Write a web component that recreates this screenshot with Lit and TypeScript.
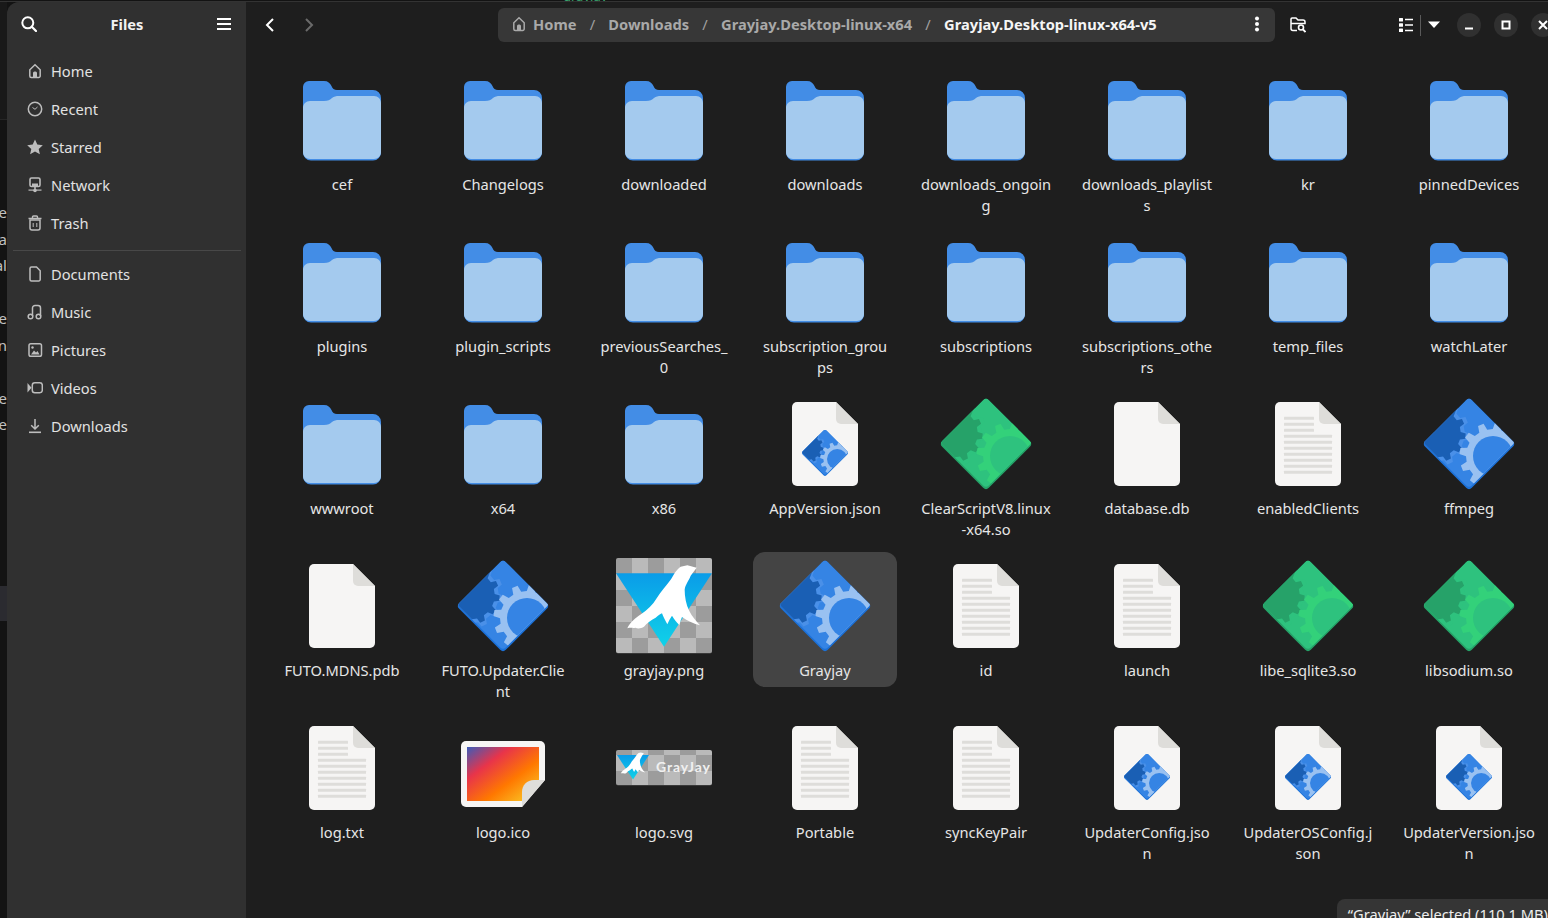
import { LitElement, html, svg, css } from "lit";
import { customElement } from "lit/decorators.js";

let uid = 0;

function gear(cx: number, cy: number, root: number, tip: number, n: number, phase: number): string {
  const pts: string[] = [];
  const step = (Math.PI * 2) / n;
  for (let i = 0; i < n; i++) {
    const a = phase + i * step;
    const offs: [number, number][] = [
      [-0.3, root],
      [-0.17, tip],
      [0.17, tip],
      [0.3, root],
    ];
    for (const [o, r] of offs) {
      const t = a + o * step;
      pts.push(`${(cx + Math.cos(t) * r).toFixed(2)},${(cy + Math.sin(t) * r).toFixed(2)}`);
    }
  }
  return pts.join(" ");
}

const BLUE = { edge: "#1c71d8", main: "#3584e4", lightGear: "#4a90e8", dark: "#1a5fb4", ring: "#99c1f1", hole: "#3584e4" };
const GREEN = { edge: "#26a269", main: "#2ec27e", lightGear: "#2ec27e", dark: "#26a269", ring: "#33d17a", hole: "#2ec27e" };

function diamond(c: typeof BLUE) {
  const id = `d${uid++}`;
  return svg`
    <defs>
      <clipPath id=${id}><rect x="15" y="15" width="66" height="66" rx="4" transform="rotate(45 48 48)"></rect></clipPath>
      <clipPath id=${id + "b"}><rect x="15" y="15" width="66" height="66" rx="4" transform="rotate(45 48 48) translate(-1.7 -1.7)"></rect></clipPath>
    </defs>
    <rect x="15" y="15" width="66" height="66" rx="4" transform="rotate(45 48 48)" fill=${c.edge}></rect>
    <g clip-path=${`url(#${id})`}>
      <g clip-path=${`url(#${id}b)`}>
        <rect width="96" height="96" fill=${c.main}></rect>
        <polygon points=${gear(15.7, 37.3, 28, 33, 12, 0.1)} fill=${c.lightGear}></polygon>
        <polygon points=${gear(15.7, 37.3, 24, 29, 12, 0.1)} fill=${c.dark}></polygon>
        <polygon points=${gear(72, 60, 27, 33.5, 12, 0.15)} fill=${c.ring}></polygon>
        <circle cx="72" cy="60" r="20" fill=${c.hole}></circle>
      </g>
    </g>`;
}

function page(lines = false) {
  const ys = [22.3, 28.3, 34.3, 40.3, 46.3, 52.3, 58.3, 64.3, 70.3, 76.3];
  return svg`
    <path d="M20 6H59L81 28V85a5 5 0 0 1-5 5H20a5 5 0 0 1-5-5V11a5 5 0 0 1 5-5z" fill="#f6f5f4"></path>
    <path d="M59 6L81 28H64a5 5 0 0 1-5-5z" fill="#deddda"></path>
    ${lines
      ? ys.map((y, i) => svg`<rect x="24" y=${y - 1.5} width=${i < 3 ? 30 : 48} height="3" rx="0.5" fill="#deddda"></rect>`)
      : ""}`;
}

function folder() {
  return svg`
    <path d="M15 9H30C34 9 36 11 37.500 14C38.500 16.500 40 18 43 18H79a8 8 0 0 1 8 8V80a8 8 0 0 1-8 8.500H17a8 8 0 0 1-8-8.500V15a6 6 0 0 1 6-6z" fill="#438de6"></path>
    <path d="M9 36C9 32 12 29 16 29H30C34 29 36 28 38 26C40 24.500 42 24 45 24H80C84 24 87 27 87 31V80C87 84 84 87 80 87H16C12 87 9 84 9 80z" fill="#a4caee"></path>`;
}

function bird() {
  return svg`<path fill="#fff" d="M290 68L262 61L242 65C228 74 221 90 213 103C200 122 184 137 170 160C158 180 143 195 123 208C108 218 90 232 82 250C92 247 100 250 106 248C114 252 124 250 132 245C140 234 152 226 167 218C174 212 180 207 186 205C190 215 196 228 202 238C206 228 212 218 216 212C222 222 230 232 238 240C241 230 243 222 246 216C262 228 282 236 300 241C288 228 276 214 268 198C258 178 254 155 254 134C256 118 266 108 272 92Z"></path>`;
}

function checker(w: number, h: number, offY: number, y0: number) {
  const id = `p${uid++}`;
  return svg`
    <defs><pattern id=${id} x="0" y=${y0 + offY} width="32" height="32" patternUnits="userSpaceOnUse">
      <rect width="32" height="32" fill="#9c9c9c"></rect>
      <rect x="16" width="16" height="16" fill="#bababa"></rect>
      <rect y="16" width="16" height="16" fill="#bababa"></rect>
    </pattern></defs>
    <rect y=${y0 + 1} width=${w} height=${h - 0.5} rx="2" fill="#555555"></rect>
    <rect y=${y0} width=${w} height=${h} rx="2" fill=${`url(#${id})`}></rect>`;
}

function triangle() {
  const id = `g${uid++}`;
  return svg`
    <defs><linearGradient id=${id} x1="0" y1="0" x2="0" y2="1">
      <stop offset="0" stop-color="#0a9ce8"></stop><stop offset="1" stop-color="#10d2e8"></stop>
    </linearGradient></defs>
    <polygon points="0,15.300 96,15.300 48,88.700" fill=${`url(#${id})`}></polygon>
    <g transform="translate(-16 -13) scale(.33333)">${bird()}</g>`;
}

function pngIcon() {
  return svg`${checker(96, 95, 0, 0)}${triangle()}`;
}

function svgIcon() {
  return svg`
    ${checker(96, 35, -11, 30)}
    <g transform="translate(1 30) scale(.33333)">${triangle()}</g>
    <text class="logotext" x="40" y="52">GrayJay</text>`;
}

function icoIcon() {
  const id = `i${uid++}`;
  return svg`
    <defs><linearGradient id=${id} x1="0" y1="0" x2="1" y2="1">
      <stop offset="0" stop-color="#3c5cb8"></stop>
      <stop offset=".3" stop-color="#e8344a"></stop>
      <stop offset=".62" stop-color="#ff7800"></stop>
      <stop offset="1" stop-color="#f9d52d"></stop>
    </linearGradient></defs>
    <path d="M11 21H85a5 5 0 0 1 5 5V60L67 87H11a5 5 0 0 1-5-5V26a5 5 0 0 1 5-5z" fill="#f6f5f4"></path>
    <path d="M12 27H84V60L67 81H12z" fill=${`url(#${id})`}></path>
    <path d="M90 60L67 87V72C67 65 72 60 79 60z" fill="#deddda"></path>`;
}

type Kind = "folder" | "blank" | "text" | "json" | "blue" | "green" | "png" | "ico" | "svg";

function drawIcon(k: Kind) {
  switch (k) {
    case "folder": return folder();
    case "blank": return page();
    case "text": return page(true);
    case "json": return svg`${page()}<g transform="translate(23.500 32.500) scale(.51)">${diamond(BLUE)}</g>`;
    case "blue": return diamond(BLUE);
    case "green": return diamond(GREEN);
    case "png": return pngIcon();
    case "ico": return icoIcon();
    case "svg": return svgIcon();
  }
}

const FILES: [string, Kind][] = [
  ["cef", "folder"], ["Changelogs", "folder"], ["downloaded", "folder"], ["downloads", "folder"],
  ["downloads_ongoing", "folder"], ["downloads_playlists", "folder"], ["kr", "folder"], ["pinnedDevices", "folder"],
  ["plugins", "folder"], ["plugin_scripts", "folder"], ["previousSearches_0", "folder"], ["subscription_groups", "folder"],
  ["subscriptions", "folder"], ["subscriptions_others", "folder"], ["temp_files", "folder"], ["watchLater", "folder"],
  ["wwwroot", "folder"], ["x64", "folder"], ["x86", "folder"], ["AppVersion.json", "json"],
  ["ClearScriptV8.linux-x64.so", "green"], ["database.db", "blank"], ["enabledClients", "text"], ["ffmpeg", "blue"],
  ["FUTO.MDNS.pdb", "blank"], ["FUTO.Updater.Clie\nnt", "blue"], ["grayjay.png", "png"], ["Grayjay", "blue"],
  ["id", "text"], ["launch", "text"], ["libe_sqlite3.so", "green"], ["libsodium.so", "green"],
  ["log.txt", "text"], ["logo.ico", "ico"], ["logo.svg", "svg"], ["Portable", "text"],
  ["syncKeyPair", "text"], ["UpdaterConfig.json", "json"], ["UpdaterOSConfig.json", "json"], ["UpdaterVersion.json", "json"],
];

const HOME = svg`<path d="M2.800 13V6.800L8 1.800L13.200 6.800V13A1.500 1.500 0 0 1 11.700 14.500H4.300A1.500 1.500 0 0 1 2.800 13Z" fill="none" stroke="currentColor" stroke-width="1.500"></path><path d="M6 14.500V10A1.500 1.500 0 0 1 7.500 8.500H8.500A1.500 1.500 0 0 1 10 10V14.500Z" fill="currentColor"></path>`;

const SIDE: Record<string, unknown> = {
  Home: HOME,
  Recent: svg`<circle cx="8" cy="8" r="6.700" fill="none" stroke="currentColor" stroke-width="1.500"></circle><path d="M5.500 6.500L8 8.300L10.500 6" fill="none" stroke="currentColor" stroke-width="1"></path>`,
  Starred: svg`<polygon points="8,0.500 10.300,5.600 15.800,6.200 11.700,9.900 12.900,15.300 8,12.600 3.100,15.300 4.300,9.900 0.200,6.200 5.700,5.600" fill="currentColor"></polygon>`,
  Network: svg`<rect x="3" y="1" width="10" height="8.500" rx="1.500" fill="none" stroke="currentColor" stroke-width="1.600"></rect><rect x="5" y="6.500" width="6" height="2.500" fill="currentColor"></rect><rect x="7.200" y="9.500" width="1.600" height="3" fill="currentColor"></rect><rect x="1.500" y="12.500" width="13" height="1.200" fill="currentColor"></rect><circle cx="8" cy="13.500" r="1.800" fill="currentColor"></circle>`,
  Trash: svg`<path d="M3 5H13V13A2 2 0 0 1 11 15H5A2 2 0 0 1 3 13Z" fill="none" stroke="currentColor" stroke-width="1.500"></path><path d="M1.500 3.500H14.500M5.500 3V2A1 1 0 0 1 6.500 1H9.500A1 1 0 0 1 10.500 2V3" fill="none" stroke="currentColor" stroke-width="1.400"></path><path d="M6.200 8V12M9.800 8V12" stroke="currentColor" stroke-width="1"></path>`,
  Documents: svg`<path d="M4.500 1H9.500L13.200 4.700V13.500A1.500 1.500 0 0 1 11.700 15H4.500A1.500 1.500 0 0 1 3 13.500V2.500A1.500 1.500 0 0 1 4.500 1Z" fill="none" stroke="currentColor" stroke-width="1.500"></path>`,
  Music: svg`<circle cx="3.500" cy="12.500" r="2.300" fill="none" stroke="currentColor" stroke-width="1.500"></circle><circle cx="11.500" cy="12.500" r="2.300" fill="none" stroke="currentColor" stroke-width="1.500"></circle><path d="M5.500 12V4A2.500 2.500 0 0 1 8 1.500H11A2.500 2.500 0 0 1 13.500 4V12" fill="none" stroke="currentColor" stroke-width="1.500"></path>`,
  Pictures: svg`<rect x="2" y="1.800" width="12.500" height="12.500" rx="1.800" fill="none" stroke="currentColor" stroke-width="1.500"></rect><path d="M4 12.500L7 8.500L9 10.500L10.500 9L12.500 12.500Z" fill="currentColor"></path><circle cx="5.500" cy="5.500" r="1.200" fill="currentColor"></circle>`,
  Videos: svg`<rect x="5.300" y="2.800" width="10" height="10" rx="2.500" fill="none" stroke="currentColor" stroke-width="1.500"></rect><polygon points="0.500,3 4.500,7.800 0.500,12.500" fill="currentColor"></polygon>`,
  Downloads: svg`<path d="M8 1V10.500M4.200 7.200L8 11L11.800 7.200" fill="none" stroke="currentColor" stroke-width="1.500"></path><rect x="2" y="13.500" width="12" height="1.600" fill="currentColor"></rect>`,
};

@customElement("app-root")
export class AppRoot extends LitElement {
  static styles = css`
    :host {
      display: block;
      width: 1548px;
      height: 918px;
      overflow: hidden;
      background: #131313;
      font-family: "Noto Sans", sans-serif;
      font-size: 14.67px;
      color: #e4e4e4;
    }
    .strip {
      height: 2px;
      box-sizing: border-box;
      overflow: hidden;
      padding-left: 563px;
      border-bottom: 1px solid #333333;
      background: #131313;
      color: #3aa56f;
      font-size: 13px;
      line-height: 14px;
    }
    .strip span { display: block; margin-top: -11px; }
    .desk { display: flex; height: 916px; }
    .gutter {
      width: 7px;
      flex: none;
      overflow: hidden;
      display: flex;
      flex-direction: column;
      background: #131313;
    }
    .gutter .upper { height: 117px; flex: none; background: #191919; border-bottom: 1px solid #262626; }
    .gutter .lines { height: 466px; flex: none; padding-top: 79px; box-sizing: border-box; color: #c0c0c0; font-size: 15px; }
    .gutter .line { height: 26.5px; line-height: 26.5px; display: flex; justify-content: flex-end; white-space: nowrap; }
    .gutter .bar { height: 35px; flex: none; background: #2b2b30; }
    .window {
      flex: 1;
      min-width: 0;
      position: relative;
      display: flex;
      overflow: hidden;
      border-top-left-radius: 12px;
      background: #1e1e1e;
    }
    .side {
      width: 239px;
      flex: none;
      background: #303030;
      display: flex;
      flex-direction: column;
      box-sizing: border-box;
    }
    .side-head {
      height: 46px;
      flex: none;
      box-sizing: border-box;
      padding: 0 15px 2px 14px;
      display: flex;
      align-items: center;
      justify-content: space-between;
      font-weight: 700;
      color: #f2f2f2;
    }
    .list { padding-top: 4px; }
    .item {
      height: 38px;
      padding-left: 20px;
      display: flex;
      align-items: center;
      gap: 8px;
      color: #e2e2e2;
    }
    .item svg { color: #bdbdbd; flex: none; }
    .sep { height: 1px; margin: 8px 5px 4px 6px; background: #484848; }
    .main { flex: 1; min-width: 0; display: flex; flex-direction: column; }
    .bar-top {
      height: 46px;
      flex: none;
      display: flex;
      align-items: center;
      padding-left: 7px;
      color: #fff;
    }
    .btn { width: 34px; height: 34px; flex: none; display: flex; align-items: center; justify-content: center; }
    .dim { color: #6a6a6a; }
    .gap5 { margin-left: 5px; }
    .path {
      width: 777px;
      height: 34px;
      flex: none;
      margin-left: 172px;
      border-radius: 6px;
      background: #373737;
      display: flex;
      align-items: center;
      padding: 0 0 2px 13px;
      box-sizing: border-box;
      font-weight: 700;
      letter-spacing: 0.02px;
      color: #a9a9a9;
      white-space: nowrap;
    }
    .path .slash { font-weight: 400; padding: 0 13.2px; color: #a0a0a0; }
    .path .home { margin-right: 6px; flex: none; }
    .path .cur { color: #f5f5f5; }
    .path .more { margin-left: auto; margin-right: 10px; color: #fff; flex: none; }
    .srch { margin-left: 6px; }
    .view { margin-left: 79px; width: 24px; }
    .vsep { width: 1px; height: 21px; background: #5a5a5a; margin-left: 2px; flex: none; }
    .caret { width: 24px; height: 24px; margin-left: 1px; }
    .circle {
      width: 24px;
      height: 24px;
      flex: none;
      border-radius: 50%;
      background: #303030;
      display: flex;
      align-items: center;
      justify-content: center;
      margin-left: 13px;
    }
    .circle.first { margin-left: 11px; }
    .grid {
      flex: 1;
      min-height: 0;
      padding: 18px 0 0 24px;
      display: grid;
      grid-template-columns: repeat(8, 144px);
      column-gap: 17px;
      grid-auto-rows: 162px;
      align-items: start;
    }
    .cell {
      padding: 6px 0;
      border-radius: 12px;
      display: flex;
      flex-direction: column;
      align-items: center;
      box-sizing: border-box;
    }
    .cell.sel { background: #444444; }
    .cell svg { display: block; flex: none; }
    .label {
      width: 133px;
      margin-top: 6px;
      line-height: 21px;
      text-align: center;
      word-break: break-all;
      white-space: pre-line;
      color: #e6e6e6;
    }
    .logotext {
      font-family: Lato, sans-serif;
      font-weight: 700;
      font-size: 14px;
      fill: #f0f0f0;
      letter-spacing: 0.9px;
    }
    .status {
      position: absolute;
      right: -11px;
      bottom: -13px;
      padding: 5px 11px 7px;
      background: #353535;
      border-radius: 8px 8px 0 0;
      color: #ededed;
      white-space: nowrap;
    }
  `;

  render() {
    uid = 0;
    const top = ["Home", "Recent", "Starred", "Network", "Trash"];
    const bottom = ["Documents", "Music", "Pictures", "Videos", "Downloads"];
    const item = (n: string) => html`<div class="item">
      <svg width="16" height="16" viewBox="0 0 16 16">${SIDE[n]}</svg><span>${n}</span>
    </div>`;
    const bg = ["re", "ra", "al", "", "je", "n", "", "e", "te"];
    return html`
      <div class="strip"><span>grayjay</span></div>
      <div class="desk">
        <div class="gutter">
          <div class="upper"></div>
          <div class="lines">${bg.map((t) => html`<div class="line">${t}</div>`)}</div>
          <div class="bar"></div>
        </div>
        <div class="window">
          <aside class="side">
            <div class="side-head">
              <svg width="16" height="16" viewBox="0 0 16 16"><circle cx="6.800" cy="6.800" r="5.500" fill="none" stroke="#fff" stroke-width="2"></circle><path d="M10.800 10.800L15 15" stroke="#fff" stroke-width="2.200" stroke-linecap="round"></path></svg>
              <span>Files</span>
              <svg width="14" height="14" viewBox="0 0 14 14"><path d="M0 2H14M0 7H14M0 12H14" stroke="#fff" stroke-width="2"></path></svg>
            </div>
            <div class="list">${top.map(item)}<div class="sep"></div>${bottom.map(item)}</div>
          </aside>
          <div class="main">
            <div class="bar-top">
              <div class="btn"><svg width="16" height="16" viewBox="0 0 16 16"><path d="M11 2L5 8L11 14" fill="none" stroke="currentColor" stroke-width="2"></path></svg></div>
              <div class="btn gap5 dim"><svg width="16" height="16" viewBox="0 0 16 16"><path d="M5 2L11 8L5 14" fill="none" stroke="currentColor" stroke-width="2"></path></svg></div>
              <div class="path">
                <svg class="home" width="16" height="16" viewBox="0 0 16 16">${HOME}</svg>
                <span>Home</span><span class="slash">/</span>
                <span>Downloads</span><span class="slash">/</span>
                <span>Grayjay.Desktop-linux-x64</span><span class="slash">/</span>
                <span class="cur">Grayjay.Desktop-linux-x64-v5</span>
                <svg class="more" width="16" height="16" viewBox="0 0 16 16"><circle cx="8" cy="2.500" r="2" fill="currentColor"></circle><circle cx="8" cy="8" r="2" fill="currentColor"></circle><circle cx="8" cy="13.500" r="2" fill="currentColor"></circle></svg>
              </div>
              <div class="btn srch"><svg width="16" height="16" viewBox="0 0 16 16"><path d="M7 13.500H3A2 2 0 0 1 1 11.500V2A1 1 0 0 1 2 1H6L8 3H13A2 2 0 0 1 15 5V6.500H1.500" fill="none" stroke="currentColor" stroke-width="1.500"></path><circle cx="11" cy="10.500" r="2.500" fill="none" stroke="currentColor" stroke-width="1.600"></circle><path d="M13 12.500L15.500 15" stroke="currentColor" stroke-width="1.800"></path></svg></div>
              <div class="btn view"><svg width="16" height="16" viewBox="0 0 16 16"><rect x="1" y="1" width="4" height="3.500" rx="0.500" fill="currentColor"></rect><rect x="1" y="6.300" width="4" height="3.500" rx="0.500" fill="currentColor"></rect><rect x="1" y="11.500" width="4" height="3.500" rx="0.500" fill="currentColor"></rect><path d="M7 2.500H15M7 8H15M7 13.500H15" stroke="currentColor" stroke-width="1.600"></path></svg></div>
              <div class="vsep"></div>
              <div class="btn caret"><svg width="12" height="8" viewBox="0 0 12 8"><polygon points="0,0.500 12,0.500 6,7" fill="currentColor"></polygon></svg></div>
              <div class="circle first"><svg width="10" height="10" viewBox="0 0 10 10"><rect x="1" y="7.500" width="8" height="2" fill="#fff"></rect></svg></div>
              <div class="circle"><svg width="10" height="10" viewBox="0 0 10 10"><rect x="1.500" y="1.500" width="7" height="7" fill="none" stroke="#fff" stroke-width="2"></rect></svg></div>
              <div class="circle"><svg width="10" height="10" viewBox="0 0 10 10"><path d="M1 1L9 9M9 1L1 9" stroke="#fff" stroke-width="2"></path></svg></div>
            </div>
            <div class="grid">
              ${FILES.map(([name, kind]) => html`
                <div class="cell ${name === "Grayjay" ? "sel" : ""}">
                  <svg width="96" height="96" viewBox="0 0 96 96">${drawIcon(kind)}</svg>
                  <div class="label">${name}</div>
                </div>`)}
            </div>
          </div>
          <div class="status">“Grayjay” selected (110.1 MB)</div>
        </div>
      </div>
    `;
  }
}
